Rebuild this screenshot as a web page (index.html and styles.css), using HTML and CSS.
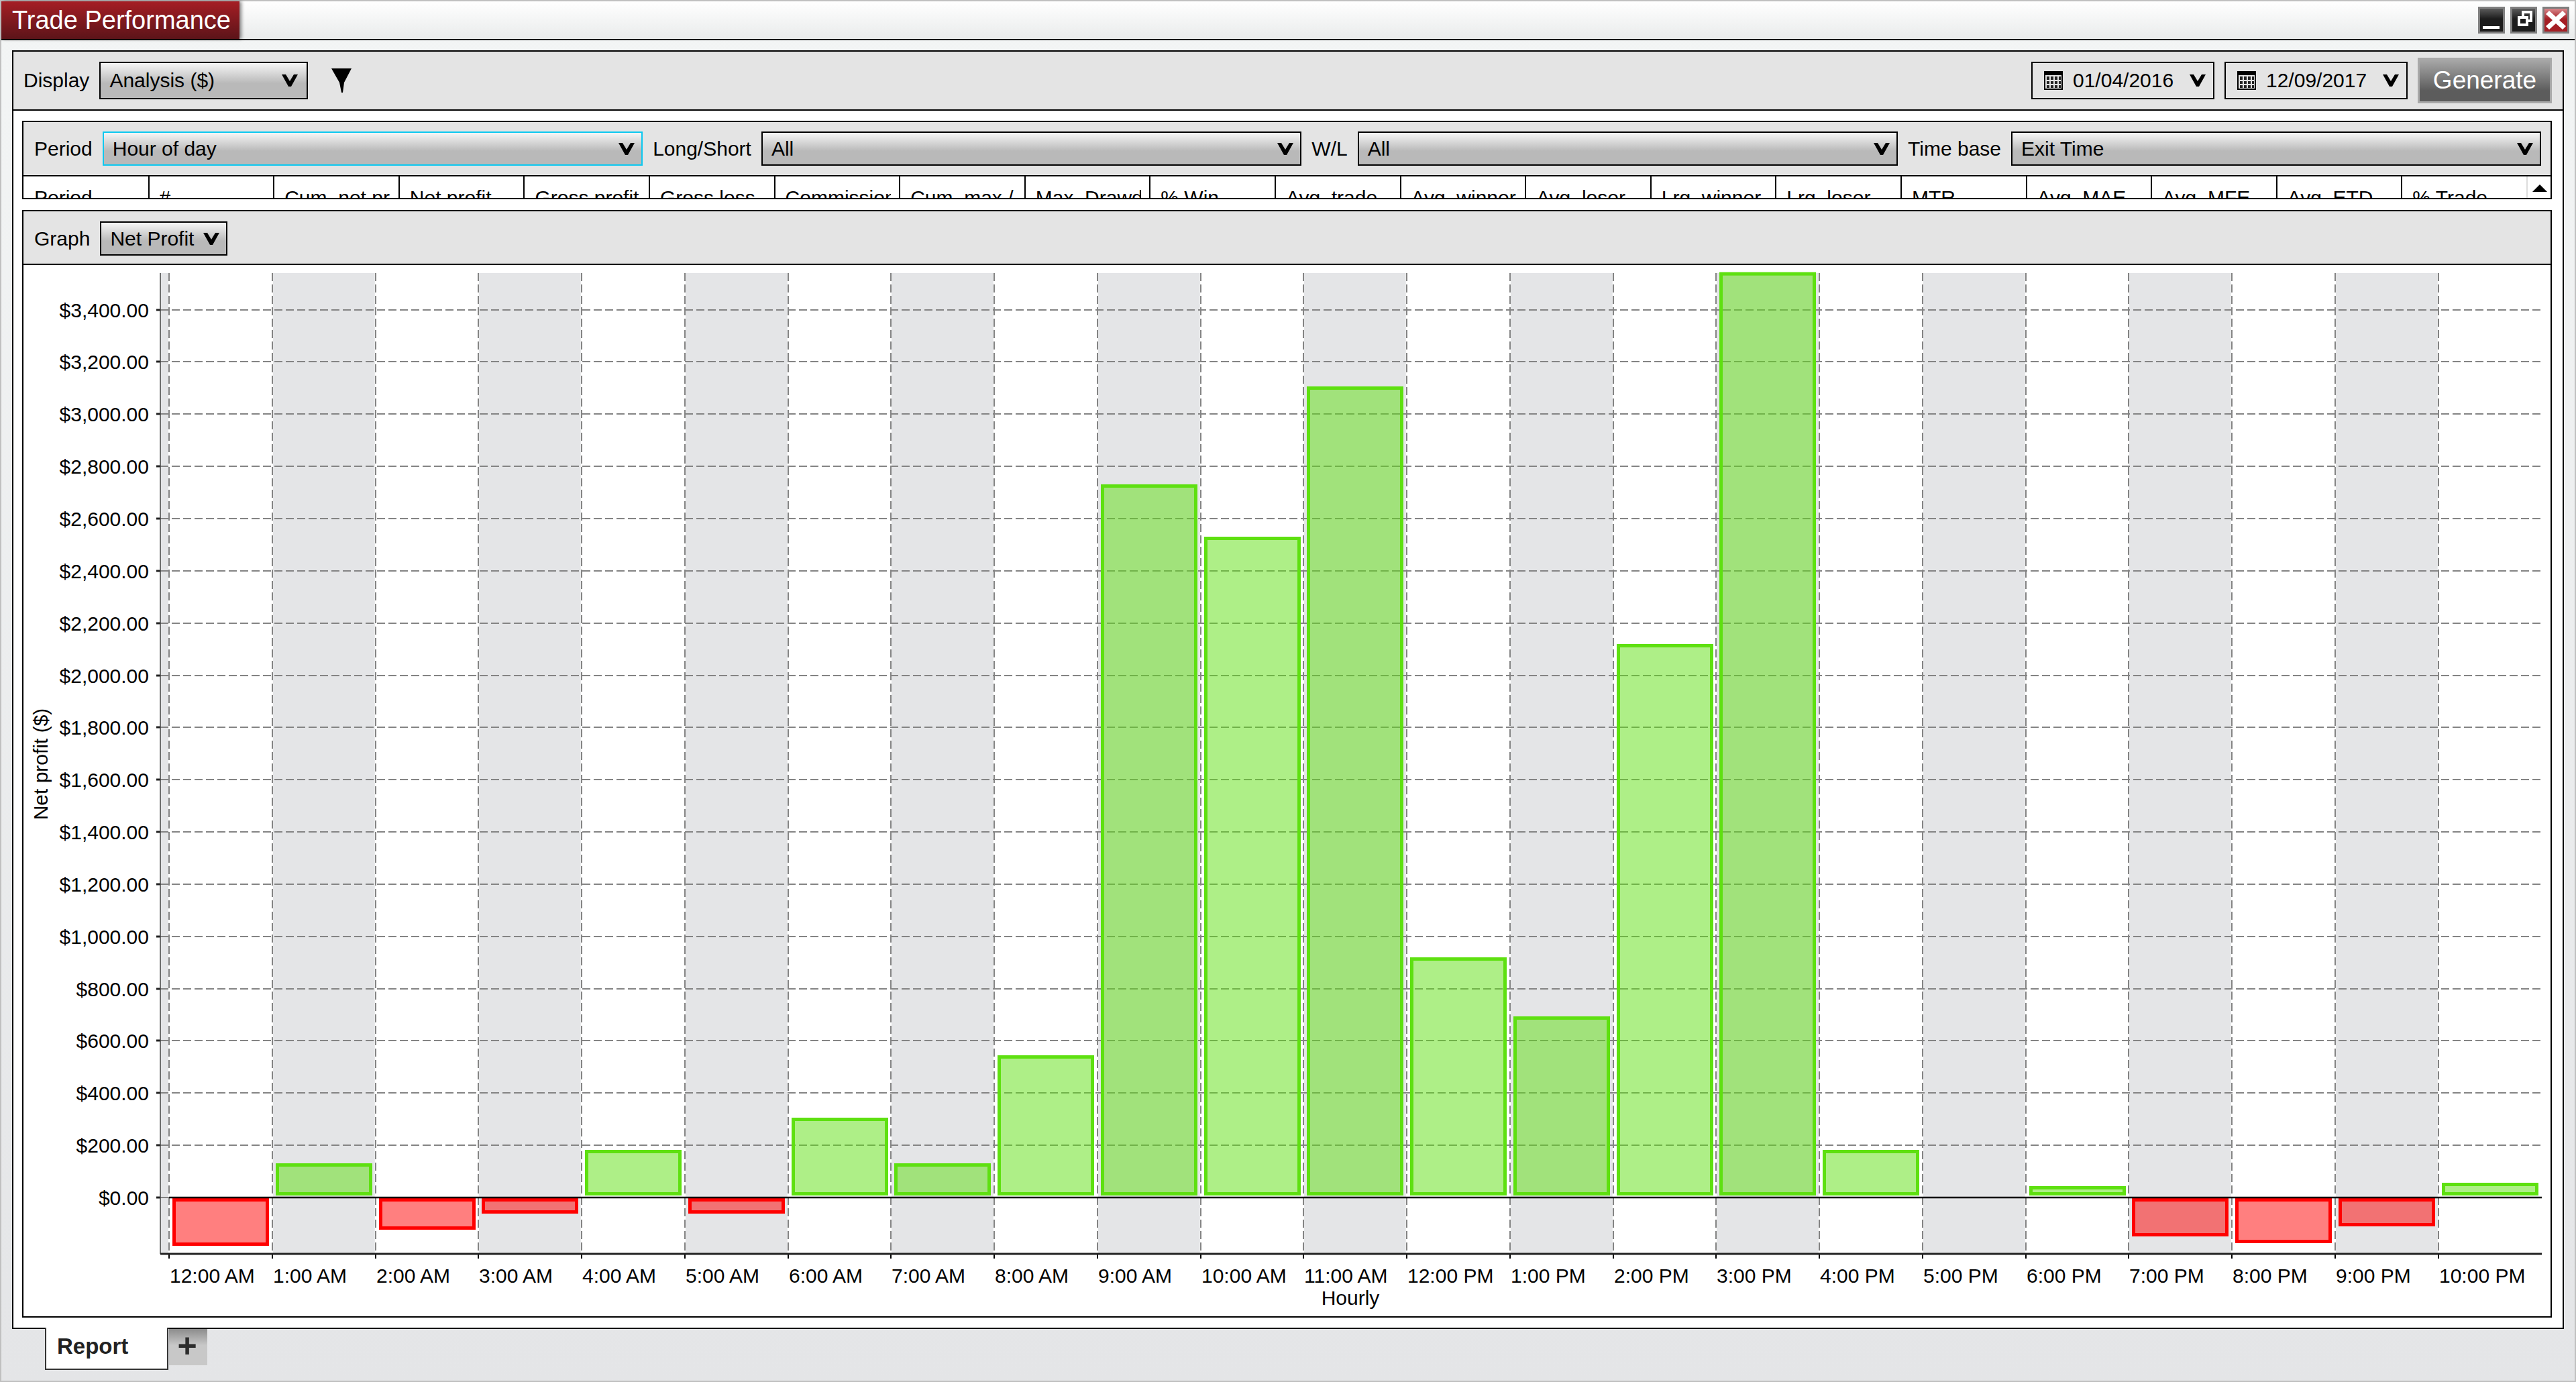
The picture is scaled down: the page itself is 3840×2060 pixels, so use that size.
FILE: index.html
```html
<!DOCTYPE html>
<html lang="en">
<head>
    <meta charset="UTF-8">
    <title>Trade Performance</title>
    <link rel="stylesheet" href="styles.css">
</head>
<body>
<svg class="icon-defs" width="0" height="0">
    <symbol id="chevron" viewBox="0 0 24 18">
        <path d="M0 0H6L12 10 18 0H24L14 18H10Z"/>
    </symbol>
    <symbol id="calendar" viewBox="0 0 28 28">
        <rect width="28" height="28" fill="#000"/>
        <rect x="2" y="6" width="24" height="20" fill="#e2e2e2"/>
        <path d="M4 8h4v5H4zM10 8h4v5h-4zM16 8h4v5h-4zM22 8h3v5h-3zM4 15h4v4H4zM10 15h4v4h-4zM16 15h4v4h-4zM22 15h3v4h-3zM4 21h4v4H4zM10 21h4v4h-4zM16 21h4v4h-4zM22 21h3v4h-3z" fill="#222"/>
    </symbol>
</svg>

<div class="window">
    <header class="titlebar">
        <div class="title-tab">Trade Performance</div>
        <div class="win-buttons">
            <div class="win-btn">
                <svg viewBox="0 0 34 34" class="win-icon"><rect x="4" y="26" width="25" height="4" fill="#fff"/></svg>
            </div>
            <div class="win-btn">
                <svg viewBox="0 0 34 34" class="win-icon"><path d="M14 3H30V20H24V26H8V11H14ZM18 7V11H24V16H26V7ZM12 15V22H20V15Z" fill="#fff" fill-rule="evenodd"/></svg>
            </div>
            <div class="win-btn win-close">
                <svg viewBox="0 0 34 34" class="win-icon"><path d="M7 3L17 12 27 3 32 8 22 17 32 26 27 31 17 22 7 31 2 26 12 17 2 8Z" fill="#fff"/></svg>
            </div>
        </div>
    </header>

    <main class="content">
        <section class="panel">
            <div class="toolbar">
                <span class="label">Display</span>
                <div class="select select-display">
                    <span>Analysis ($)</span>
                    <svg class="chevron"><use href="#chevron"/></svg>
                </div>
                <svg class="funnel" viewBox="0 0 30 36"><path d="M0 0H30L19 21 17 36H15L12 21Z"/></svg>
                <div class="date-picker date-first">
                    <svg class="calendar"><use href="#calendar"/></svg>
                    <span>01/04/2016</span>
                    <svg class="chevron"><use href="#chevron"/></svg>
                </div>
                <div class="date-picker">
                    <svg class="calendar"><use href="#calendar"/></svg>
                    <span>12/09/2017</span>
                    <svg class="chevron"><use href="#chevron"/></svg>
                </div>
                <button class="generate">Generate</button>
            </div>

            <div class="report">
                <div class="filter-box">
                    <div class="band band-filter">
                        <span class="label">Period</span>
                        <div class="select select-wide select-active">
                            <span>Hour of day</span>
                            <svg class="chevron"><use href="#chevron"/></svg>
                        </div>
                        <span class="label">Long/Short</span>
                        <div class="select select-wide">
                            <span>All</span>
                            <svg class="chevron"><use href="#chevron"/></svg>
                        </div>
                        <span class="label">W/L</span>
                        <div class="select select-wide">
                            <span>All</span>
                            <svg class="chevron"><use href="#chevron"/></svg>
                        </div>
                        <span class="label">Time base</span>
                        <div class="select select-last">
                            <span>Exit Time</span>
                            <svg class="chevron"><use href="#chevron"/></svg>
                        </div>
                    </div>
                    <div class="col-row">
                        <div class="col"><span>Period</span></div>
                        <div class="col"><span>#</span></div>
                        <div class="col"><span>Cum. net profit</span></div>
                        <div class="col"><span>Net profit</span></div>
                        <div class="col"><span>Gross profit</span></div>
                        <div class="col"><span>Gross loss</span></div>
                        <div class="col"><span>Commission</span></div>
                        <div class="col"><span>Cum. max /</span></div>
                        <div class="col"><span>Max. Drawdown</span></div>
                        <div class="col"><span>% Win</span></div>
                        <div class="col"><span>Avg. trade</span></div>
                        <div class="col"><span>Avg. winner</span></div>
                        <div class="col"><span>Avg. loser</span></div>
                        <div class="col"><span>Lrg. winner</span></div>
                        <div class="col"><span>Lrg. loser</span></div>
                        <div class="col"><span>MTR</span></div>
                        <div class="col"><span>Avg. MAE</span></div>
                        <div class="col"><span>Avg. MFE</span></div>
                        <div class="col"><span>Avg. ETD</span></div>
                        <div class="col col-last"><span>% Trade</span></div>
                        <div class="scroll-up"></div>
                    </div>
                </div>

                <div class="graph-box">
                    <div class="band band-graph">
                        <span class="label">Graph</span>
                        <div class="select select-graph">
                            <span>Net Profit</span>
                            <svg class="chevron"><use href="#chevron"/></svg>
                        </div>
                    </div>
                    <svg id="chart" class="chart" viewBox="35 395 3767 1567"></svg>
                </div>
            </div>
        </section>
    </main>

    <footer class="tabs">
        <div class="tab-report">Report</div>
        <div class="tab-add">+</div>
    </footer>
</div>

<script src="chart.js"></script>
</body>
</html>
```

FILE: styles.css
```css
*{
    margin: 0;
    padding: 0;
    box-sizing: border-box;
}
body{
    font-family: "Liberation Sans", Arial, sans-serif;
    font-size: 30px;
    color: #000;
    overflow: hidden;
}
.icon-defs{
    position: absolute;
}
.window{
    width: 100vw;
    height: 100vh;
    display: flex;
    flex-direction: column;
    border: 2px solid #c0c0c0;
    background: linear-gradient(#f3f5f5, #e4e5e7);
}

/* title bar */
.titlebar{
    height: 58px;
    flex: none;
    display: flex;
    border-bottom: 2px solid #000;
    background: linear-gradient(#fff, #e9ebeb);
}
.title-tab{
    width: 355px;
    height: 56px;
    line-height: 56px;
    padding-left: 16px;
    font-size: 38px;
    color: #fff;
    white-space: nowrap;
    background: linear-gradient(#a51e24, #5c1419);
    box-shadow: 3px 0 5px rgba(0,0,0,.45);
}
.win-buttons{
    margin-left: auto;
    margin-right: 8px;
    margin-top: 8px;
    display: flex;
    gap: 8px;
}
.win-btn{
    width: 40px;
    height: 40px;
    border: 3px solid #7f7f7f;
    background: linear-gradient(#5a5a5a, #1c1c1c 45%);
}
.win-close{
    background: linear-gradient(#d8868a, #a51e24 45%);
}
.win-icon{
    display: block;
    width: 34px;
    height: 34px;
}

/* main panel */
.content{
    flex: 1;
    min-height: 0;
    padding: 15px 16px 0 16px;
    display: flex;
}
.panel{
    flex: 1;
    min-width: 0;
    display: flex;
    flex-direction: column;
    border: 2px solid #000;
    background-color: #fff;
}
.toolbar{
    height: 88px;
    flex: none;
    display: flex;
    align-items: center;
    padding: 0 16px 0 15px;
    gap: 15px;
    background-color: #e4e4e4;
    border-bottom: 2px solid #000;
}
.label{
    white-space: nowrap;
}
.select{
    height: 51px;
    display: flex;
    align-items: center;
    justify-content: space-between;
    padding: 0 10px 0 13px;
    border: 2px solid #000;
    background: linear-gradient(#f6f6f6, #b9b9b9 58%);
}
.select-display{
    width: 311px;
    height: 56px;
    padding-right: 13px;
}
.select-wide{
    flex: 1;
}
.select-last{
    flex: 0 0 790px;
}
.select-active{
    border-color: #0cc8f0;
}
.select-graph{
    width: 190px;
}
.chevron{
    width: 24px;
    height: 18px;
    flex: none;
}
.funnel{
    width: 30px;
    height: 36px;
    margin-left: 20px;
}
.date-picker{
    width: 273px;
    height: 56px;
    display: flex;
    align-items: center;
    padding: 0 11px 0 17px;
    border: 2px solid #000;
}
.date-first{
    margin-left: auto;
}
.date-picker span{
    margin-left: 15px;
    margin-right: auto;
}
.calendar{
    width: 28px;
    height: 28px;
    flex: none;
}
.generate{
    width: 200px;
    height: 68px;
    font-family: inherit;
    font-size: 37px;
    color: #fff;
    border: 3px solid #a9a9a9;
    background: linear-gradient(#a8a8a8, #5c5c5c 75%);
}

/* report area */
.report{
    flex: 1;
    min-height: 0;
    min-width: 0;
    display: flex;
    flex-direction: column;
    padding: 15px 16px 15px 13px;
}
.filter-box{
    height: 117px;
    flex: none;
    border: 2px solid #000;
}
.band{
    display: flex;
    align-items: center;
    padding-left: 16px;
    background-color: #e4e4e4;
    border-bottom: 2px solid #000;
}
.band-filter{
    height: 81px;
    gap: 15px;
    padding-right: 14px;
}
.band-graph{
    height: 80px;
    flex: none;
    gap: 15px;
    padding-top: 3px;
}
.col-row{
    height: 32px;
    display: flex;
    padding-left: 1px;
    overflow: hidden;
}
.col{
    flex: 0 0 186.6px;
    min-width: 0;
    padding: 15px 12px 0 15px;
    border-right: 2px solid #000;
}
.col-last{
    border-right: 2px solid #ddd;
}
.col span{
    display: block;
    overflow: hidden;
    white-space: nowrap;
    line-height: 34px;
}
.scroll-up{
    flex: 1;
    position: relative;
}
.scroll-up::after{
    content: "";
    position: absolute;
    left: 7px;
    top: 12px;
    border-left: 11px solid transparent;
    border-right: 11px solid transparent;
    border-bottom: 11px solid #000;
}
.graph-box{
    flex: 1;
    min-height: 0;
    margin-top: 16px;
    display: flex;
    flex-direction: column;
    border: 2px solid #000;
}
.chart{
    flex: 1;
    min-height: 0;
    width: 100%;
    display: block;
}

/* chart parts */
.plot-band{
    fill: #e4e5e7;
}
.grid-line{
    stroke: #848484;
    stroke-width: 2;
    stroke-dasharray: 12 5;
}
.bar-up{
    fill: rgba(94,224,16,.5);
    stroke: #5ee010;
    stroke-width: 5;
}
.bar-down{
    fill: rgba(255,0,0,.5);
    stroke: #ff0000;
    stroke-width: 5;
}
.axis-line{
    stroke: #222;
    stroke-width: 3;
}
.axis-left{
    stroke: #444;
    stroke-width: 1.5;
}
.tick{
    stroke: #000;
    stroke-width: 2;
}
.zero-line{
    stroke: #000;
    stroke-width: 2.5;
}
.chart text{
    font-family: "Liberation Sans", Arial, sans-serif;
    font-size: 30px;
    fill: #000;
}
.y-label{
    text-anchor: end;
}
.axis-title{
    text-anchor: middle;
}

/* bottom tabs */
.tabs{
    height: 77px;
    flex: none;
    display: flex;
    align-items: flex-start;
    padding-left: 65px;
    position: relative;
}
.tab-report{
    width: 184px;
    height: 63px;
    margin-top: -2px;
    padding: 9px 0 0 16px;
    font-size: 33px;
    font-weight: bold;
    color: #222;
    background-color: #fff;
    border: 2px solid #333;
    border-top: none;
}
.tab-add{
    width: 57px;
    height: 54px;
    margin-left: 1px;
    padding-right: 3px;
    text-align: center;
    line-height: 50px;
    font-size: 50px;
    font-weight: bold;
    color: #2c2c2c;
    background: linear-gradient(#8c8c8c, #c8c8c8 45%);
}
```

FILE: chart.js
```js
const PLOT_LEFT = 252;
const SLOT = 153.76;
const ZERO_Y = 1785;
const PER_DOLLAR = 77.85 / 200;
const AXIS_Y = 1869;
const RIGHT = 3789;

const hours = [
    ["12:00 AM", -185], ["1:00 AM", 131], ["2:00 AM", -123.3], ["3:00 AM", -61.7],
    ["4:00 AM", 182.4], ["5:00 AM", -61.7], ["6:00 AM", 305.7], ["7:00 AM", 131],
    ["8:00 AM", 544.6], ["9:00 AM", 2731], ["10:00 AM", 2530.5], ["11:00 AM", 3106],
    ["12:00 PM", 919.7], ["1:00 PM", 693.6], ["2:00 PM", 2119.5], ["3:00 PM", 3543.5],
    ["4:00 PM", 182.4], ["5:00 PM", 0], ["6:00 PM", 43.7], ["7:00 PM", -149],
    ["8:00 PM", -174.7], ["9:00 PM", -110.5], ["10:00 PM", 56.5]
];

function money(v){
    return "$" + v.toLocaleString("en-US", {minimumFractionDigits: 2});
}

function buildChart(){
    let bands = `<rect class="plot-band" x="239" y="407" width="12" height="${AXIS_Y - 407}"/>`;
    let grid = "";
    let bars = "";
    let labels = "";
    let ticks = "";

    // horizontal grid + y labels
    for(let v = 0; v <= 3400; v += 200){
        const y = Math.round(ZERO_Y - v * PER_DOLLAR);
        grid += `<line class="grid-line" x1="239" x2="${RIGHT}" y1="${y}" y2="${y}"/>`;
        ticks += `<line class="axis-line" x1="233" x2="239" y1="${y}" y2="${y}"/>`;
        labels += `<text class="y-label" x="222" y="${y + 11}">${money(v)}</text>`;
    }

    hours.forEach(function(hour, i){
        const x = Math.round(PLOT_LEFT + SLOT * i);
        if(i % 2 === 1){
            bands += `<rect class="plot-band" x="${x + 1}" y="407" width="${SLOT - 2}" height="${AXIS_Y - 407}"/>`;
        }
        grid += `<line class="grid-line" x1="${x}" x2="${x}" y1="407" y2="${AXIS_Y}"/>`;
        ticks += `<line class="tick" x1="${x}" x2="${x}" y1="${AXIS_Y}" y2="${AXIS_Y + 7}"/>`;
        labels += `<text x="${x + 1}" y="1912">${hour[0]}</text>`;

        const value = hour[1];
        if(value > 0){
            const top = ZERO_Y - value * PER_DOLLAR;
            bars += `<rect class="bar-up" x="${x + 7.5}" y="${top + 2.5}" width="139" height="${1782 - top - 5}"/>`;
        }
        else if(value < 0){
            const bottom = ZERO_Y - value * PER_DOLLAR;
            bars += `<rect class="bar-down" x="${x + 7.5}" y="1788.5" width="139" height="${bottom - 1786 - 5}"/>`;
        }
    });

    const axes = `
        <line class="axis-left" x1="239" x2="239" y1="407" y2="${AXIS_Y}"/>
        <line class="axis-line" x1="239" x2="${RIGHT}" y1="${AXIS_Y}" y2="${AXIS_Y}"/>
        <line class="zero-line" x1="252" x2="${RIGHT}" y1="${ZERO_Y}" y2="${ZERO_Y}"/>
        <text class="axis-title" x="2013" y="1945">Hourly</text>
        <text class="axis-title" transform="translate(71 1139) rotate(-90)">Net profit ($)</text>`;

    document.getElementById("chart").innerHTML = bands + grid + bars + ticks + axes + labels;
}

buildChart();
```
